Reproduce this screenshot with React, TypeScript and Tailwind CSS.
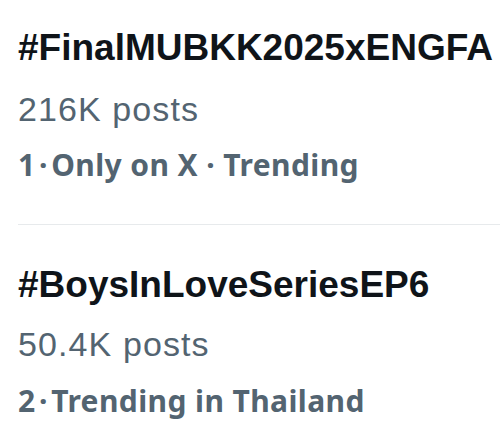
function Trend({ title, posts, meta, postsGap, metaGap }: { title: string; posts: string; meta: string; postsGap: string; metaGap: string }) {
  return (
    <div className="flex flex-col">
      <div className="text-[37px] leading-[48px] font-bold text-[#0f1419] whitespace-nowrap">{title}</div>
      <div className={`${postsGap} text-[34px] leading-[40px] tracking-[1.1px] text-[#536471] whitespace-nowrap`}>{posts}</div>
      <div className={`${metaGap} font-['Noto_Sans',sans-serif] text-[30px] leading-[40px] tracking-[0.4px] font-bold text-[#536471] whitespace-nowrap`}>{meta}</div>
    </div>
  );
}

export default function App() {
  return (
    <div className="w-[500px] h-[442px] bg-white overflow-hidden font-['Liberation_Sans',Arial,sans-serif]">
      <div className="pl-[18px] flex flex-col">
        <div className="pt-[24px] pb-[39px] border-b border-[#e7eaec]">
          <Trend title="#FinalMUBKK2025xENGFA" posts="216K posts" meta={"1\u200A·\u200AOnly on X · Trending"} postsGap="mt-[17px]" metaGap="mt-[16px]" />
        </div>
        <div className="pt-[36px]">
          <Trend title="#BoysInLoveSeriesEP6" posts="50.4K posts" meta={"2\u200A·\u200ATrending in Thailand"} postsGap="mt-[15px]" metaGap="mt-[17px]" />
        </div>
      </div>
    </div>
  );
}
